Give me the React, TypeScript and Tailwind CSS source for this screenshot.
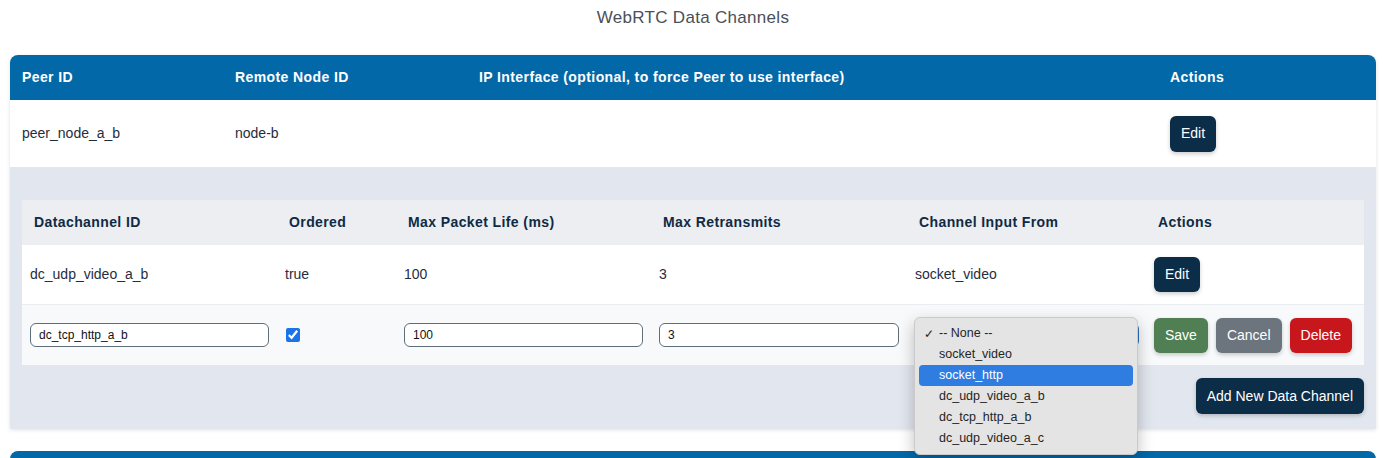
import React from 'react';

const font = { fontFamily: '"Liberation Sans", Arial, sans-serif' };

const options = ['-- None --', 'socket_video', 'socket_http', 'dc_udp_video_a_b', 'dc_tcp_http_a_b', 'dc_udp_video_a_c'];

const Btn = ({ children, className }: { children: React.ReactNode; className: string }) => (
    <button className={`rounded-md px-[11px] text-[14px] text-white shadow-[0_2px_4px_rgba(0,0,0,0.2)] ${className}`}>
        {children}
    </button>
);

const SelectPopup = () => (
    <div className="absolute left-[7px] top-[-6px] z-10 w-[224px] rounded-md border border-[#cacaca] bg-[#e4e4e4] px-[4px] py-[5px] shadow-[0_6px_16px_rgba(0,0,0,0.25)]">
        {options.map((o, i) => (
            <div
                key={o}
                className={`relative flex h-[21px] items-center rounded-[4px] pl-[20px] text-[12.5px] ${i === 2 ? 'bg-[#2f7de1] text-white' : 'text-[#242424]'}`}
            >
                {i === 0 && <span className="absolute left-[5px] text-[12px]">✓</span>}
                {o}
            </div>
        ))}
    </div>
);

const innerCols = 'grid grid-cols-[255px_119px_255px_256px_239px_1fr] items-center';

const DataChannels = () => (
    <div className="bg-[#e2e6ee] px-3 pt-[33px] pb-[15px]">
        <div className="bg-white">
            <div className={`${innerCols} h-[45px] bg-[#eceef1] text-[14px] font-bold tracking-[0.4px] text-[#0f2a44]`}>
                <div className="px-3">Datachannel ID</div>
                <div className="px-3">Ordered</div>
                <div className="px-3">Max Packet Life (ms)</div>
                <div className="px-3">Max Retransmits</div>
                <div className="px-3">Channel Input From</div>
                <div className="px-3">Actions</div>
            </div>
            <div className={`${innerCols} h-[60px] border-b border-[#e9ecf0] text-[14px] text-[#1f2d3d]`}>
                <div className="px-2">dc_udp_video_a_b</div>
                <div className="px-2">true</div>
                <div className="px-2">100</div>
                <div className="px-2">3</div>
                <div className="px-2">socket_video</div>
                <div className="px-2">
                    <Btn className="h-[35px] bg-[#0c2d48]">Edit</Btn>
                </div>
            </div>
            <div className={`${innerCols} h-[60px] bg-[#f8f9fb] text-[12px] text-[#111]`}>
                <div className="px-2">
                    <input className="h-6 w-full rounded-md border border-[#5f6e79] bg-white px-2 outline-none" defaultValue="dc_tcp_http_a_b" />
                </div>
                <div className="px-[9px]">
                    <input type="checkbox" defaultChecked className="block h-[14px] w-[14px] accent-[#1a73e8]" />
                </div>
                <div className="px-2">
                    <input className="h-6 w-full rounded-md border border-[#5f6e79] bg-white px-2 outline-none" defaultValue="100" />
                </div>
                <div className="px-2">
                    <input className="h-6 w-full rounded-md border border-[#5f6e79] bg-white px-2 outline-none" defaultValue="3" />
                </div>
                <div className="relative px-[7px]">
                    <div className="h-6 w-full rounded-md border border-[#2f6fb8] bg-white" />
                    <SelectPopup />
                </div>
                <div className="flex gap-2 px-2">
                    <Btn className="h-[35px] bg-[#4f7f52]">Save</Btn>
                    <Btn className="h-[35px] bg-[#6c757d]">Cancel</Btn>
                    <Btn className="h-[35px] bg-[#c8161d]">Delete</Btn>
                </div>
            </div>
        </div>
        <div className="mt-[13px] flex justify-end">
            <Btn className="h-9 bg-[#0c2d48]">Add New Data Channel</Btn>
        </div>
    </div>
);

const outerCols = 'grid grid-cols-[213px_244px_691px_1fr] items-center';

const PeerCard = () => (
    <div className="mb-[22px] rounded-t-lg shadow-[0_1px_4px_rgba(0,0,0,0.12)]">
        <div className={`${outerCols} h-[45px] rounded-t-lg bg-[#0268a8] text-[14px] font-bold tracking-[0.4px] text-white`}>
            <div className="px-3">Peer ID</div>
            <div className="px-3">Remote Node ID</div>
            <div className="px-3">IP Interface (optional, to force Peer to use interface)</div>
            <div className="px-3">Actions</div>
        </div>
        <div className={`${outerCols} h-[67px] bg-white text-[14px] text-[#1f2d3d]`}>
            <div className="px-3">peer_node_a_b</div>
            <div className="px-3">node-b</div>
            <div className="px-3"></div>
            <div className="px-3">
                <Btn className="h-9 bg-[#0c2d48]">Edit</Btn>
            </div>
        </div>
        <DataChannels />
    </div>
);

export default function App() {
    return (
        <div className="min-h-screen bg-white pl-[10px] pr-[8px]" style={font}>
            <h1 className="pt-[6px] pb-[25px] text-center text-[17px] leading-6 tracking-[0.3px] text-[#4a5058]">WebRTC Data Channels</h1>
            <PeerCard />
            {/* next peer card, only its header edge is in view */}
            <div className="h-[45px] rounded-t-lg bg-[#0268a8]" />
        </div>
    );
}
